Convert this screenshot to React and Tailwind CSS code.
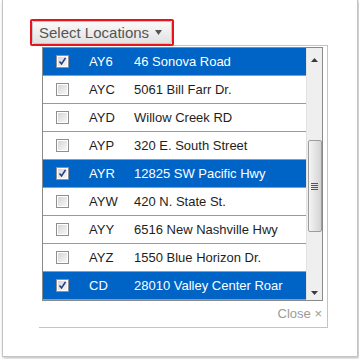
const locations = [
  { code: 'AY6', address: '46 Sonova Road', selected: true },
  { code: 'AYC', address: '5061 Bill Farr Dr.', selected: false },
  { code: 'AYD', address: 'Willow Creek RD', selected: false },
  { code: 'AYP', address: '320 E. South Street', selected: false },
  { code: 'AYR', address: '12825 SW Pacific Hwy', selected: true },
  { code: 'AYW', address: '420 N. State St.', selected: false },
  { code: 'AYY', address: '6516 New Nashville Hwy', selected: false },
  { code: 'AYZ', address: '1550 Blue Horizon Dr.', selected: false },
  { code: 'CD', address: '28010 Valley Center Roar', selected: true },
];

const Checkbox = ({ checked }) => (
  <div className="w-[13px] h-[13px] shrink-0 border border-[#8f8f8f] bg-white p-px">
    <div className="w-full h-full bg-gradient-to-br from-[#d6d6d6] to-[#f7f7f7] flex items-center justify-center">
      {checked && (
        <svg width="9" height="9" viewBox="0 0 9 9">
          <path d="M1.5 4.5 L3.5 7 L7.5 1" fill="none" stroke="#2b3f8f" strokeWidth="1.6" />
        </svg>
      )}
    </div>
  </div>
);

const Row = ({ code, address, selected }) => (
  <div
    className={
      selected
        ? 'h-[28px] flex items-center pl-[13px] border-b border-[#9a9a9a] bg-[#0063c6] text-white'
        : 'h-[28px] flex items-center pl-[13px] border-b border-[#9a9a9a] bg-white text-[#1e1e1e]'
    }
  >
    <Checkbox checked={selected} />
    <span className="ml-[20px] w-[45px]">{code}</span>
    <span className="whitespace-nowrap">{address}</span>
  </div>
);

const Scrollbar = () => (
  <div className="w-[16px] h-full bg-[#efefef] border-l border-[#e2e2e2] flex flex-col items-center">
    {/* up arrow */}
    <svg width="7" height="4" viewBox="0 0 7 4" className="mt-[10px]">
      <path d="M0 4 L3.5 0 L7 4 Z" fill="#3a3a3a" />
    </svg>
    {/* thumb */}
    <div className="mt-[78px] w-[14px] h-[92px] rounded-[2px] border border-[#9c9c9c] bg-gradient-to-r from-[#f4f4f4] to-[#d4d4d4] flex flex-col items-center justify-center gap-[1px]">
      <div className="w-[7px] h-px bg-[#555]" />
      <div className="w-[7px] h-px bg-[#555]" />
      <div className="w-[7px] h-px bg-[#555]" />
      <div className="w-[7px] h-px bg-[#555]" />
    </div>
    <div className="flex-1" />
    {/* down arrow */}
    <svg width="7" height="4" viewBox="0 0 7 4" className="mb-[5px]">
      <path d="M0 0 L7 0 L3.5 4 Z" fill="#3a3a3a" />
    </svg>
  </div>
);

export default function App() {
  return (
    <div className="w-[359px] h-[359px] bg-white overflow-hidden font-['Liberation_Sans',Arial,sans-serif]">
      <div className="ml-[2px] w-[356px] h-[357px] bg-white border-x border-b border-[#c4c4c4] shadow-[1px_1px_3px_rgba(0,0,0,0.3)] pt-[19px] pl-[27px]">
        {/* Select Locations trigger */}
        <div className="relative z-10 w-[144px] h-[27px] border-2 border-[#e8141c] rounded-[2px]">
          <button className="w-full h-full flex items-center pl-[6px] gap-[6px] border border-[#c6c6c6] rounded-[2px] bg-gradient-to-b from-[#fafafa] to-[#e2e2e2] text-[15px] text-[#555]">
            <span className="leading-none">Select Locations</span>
            <svg width="7" height="5" viewBox="0 0 7 5">
              <path d="M0 0 L7 0 L3.5 5 Z" fill="#555" />
            </svg>
          </button>
        </div>

        {/* Dropdown panel */}
        <div className="-mt-px ml-[9px] w-[289px] border-t border-r border-b border-[#c4c4c4] bg-white">
          <div className="mt-px ml-[3px] w-[281px] h-[254px] border border-[#8a8a8a] flex text-[13px]">
            <div className="w-[263px] flex flex-col">
              {locations.map((loc) => (
                <Row key={loc.code} {...loc} />
              ))}
            </div>
            <Scrollbar />
          </div>
          <div className="h-[26px] flex items-center justify-end pr-[5px] text-[13px] text-[#9a9a9a]">
            Close ×
          </div>
        </div>
      </div>
    </div>
  );
}
